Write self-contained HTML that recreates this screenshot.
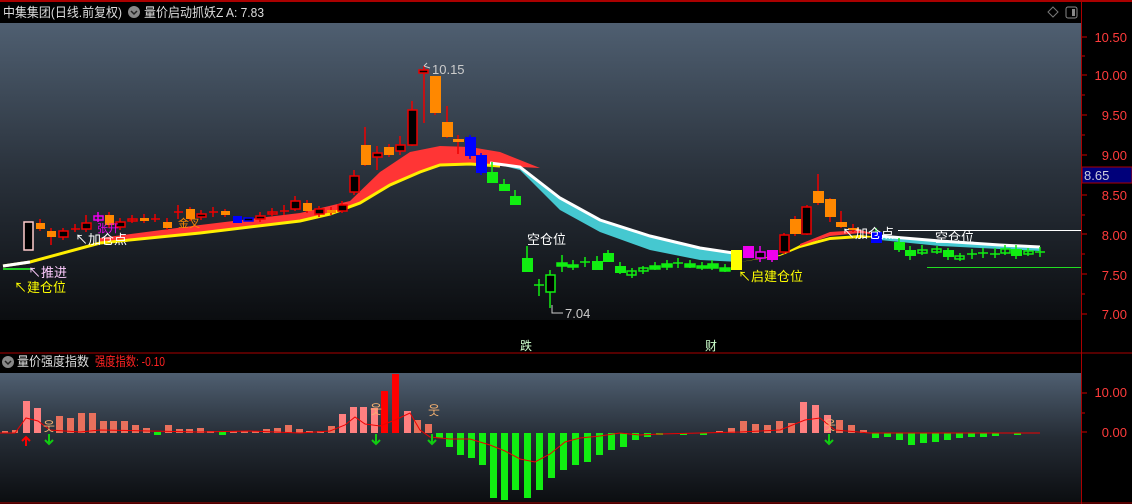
<!DOCTYPE html>
<html><head><meta charset="utf-8"><style>
body{margin:0;background:#000;width:1132px;height:504px;overflow:hidden;font-family:"Liberation Sans","Noto Sans CJK SC",sans-serif}
svg{display:block}
</style></head><body>
<svg width="1132" height="504" xmlns="http://www.w3.org/2000/svg" font-family="Liberation Sans, Noto Sans CJK SC, sans-serif">
<defs>
<linearGradient id="g1" x1="0" y1="0" x2="0" y2="1"><stop offset="0" stop-color="#4f5f71"/><stop offset="0.5" stop-color="#2a323c"/><stop offset="1" stop-color="#0b0d10"/></linearGradient>
<linearGradient id="g2" x1="0" y1="0" x2="0" y2="1"><stop offset="0" stop-color="#4f5f71"/><stop offset="0.5" stop-color="#252c35"/><stop offset="1" stop-color="#0b0d10"/></linearGradient>
</defs>
<rect width="1132" height="504" fill="#000"/>
<rect x="0" y="23" width="1081" height="297" fill="url(#g1)"/>
<rect x="0" y="373" width="1081" height="130" fill="url(#g2)"/>
<line x1="0" y1="1" x2="1132" y2="1" stroke="#a00" stroke-width="2"/>
<line x1="1081.5" y1="0" x2="1081.5" y2="504" stroke="#a00"/>
<line x1="0" y1="353" x2="1132" y2="353" stroke="#a00"/>
<line x1="0" y1="503" x2="1132" y2="503" stroke="#a00"/>
<text x="3" y="17" font-size="13" fill="#ddd" textLength="119" lengthAdjust="spacingAndGlyphs">中集集团(日线.前复权)</text>
<circle cx="134" cy="12" r="6" fill="#888"/><path d="M131 11l3 3 3-3" stroke="#222" stroke-width="1.5" fill="none"/>
<text x="144" y="17" font-size="13" fill="#ddd" textLength="120" lengthAdjust="spacingAndGlyphs">量价启动抓妖Z  A: 7.83</text>
<path d="M1053 7l5 5-5 5-5-5z" stroke="#777" fill="none"/>
<rect x="1066" y="7" width="11" height="11" rx="2" stroke="#888" fill="none"/><rect x="1072" y="9" width="3" height="7" fill="#888"/>
<circle cx="8" cy="362" r="6" fill="#888"/><path d="M5 361l3 3 3-3" stroke="#222" stroke-width="1.5" fill="none"/>
<text x="17" y="366" font-size="13" fill="#ddd" textLength="72" lengthAdjust="spacingAndGlyphs">量价强度指数</text>
<text x="95" y="366" font-size="13" fill="#f22" textLength="70" lengthAdjust="spacingAndGlyphs">强度指数: -0.10</text>
<g font-size="13" fill="#ff3b3b" text-anchor="end">
<text x="1127" y="42">10.50</text><text x="1127" y="80">10.00</text><text x="1127" y="120">9.50</text><text x="1127" y="160">9.00</text><text x="1127" y="200">8.50</text><text x="1127" y="240">8.00</text><text x="1127" y="280">7.50</text><text x="1127" y="319">7.00</text>
<text x="1127" y="397">10.00</text><text x="1127" y="437">0.00</text></g>
<g stroke="#c00" stroke-width="1">
<path d="M1082 37h5M1082 56h3M1082 75h5M1082 95h3M1082 115h5M1082 135h3M1082 155h5M1082 195h5M1082 215h3M1082 234h5M1082 254h3M1082 274h5M1082 294h3M1082 314h5M1082 393h5M1082 413h3M1082 432h5"/></g>
<rect x="1082" y="167" width="50" height="16" fill="#00007a" stroke="#a00"/>
<text x="1084" y="180" font-size="13" fill="#ccd">8.65</text>
<path d="M100 238L200 225L300 213L350 201L380 172L410 152L440 146L470 147L500 152L520 160L540 168L500 166L470 164L440 165L420 172L390 185L360 203L330 214L300 221L200 233L100 243Z" fill="#ff3535"/>
<path d="M3 266L30 262L100 243L200 233L300 221L330 214L360 203L390 185L420 172L440 165L470 164L500 166" stroke="#ffee00" stroke-width="3" fill="none"/>
<path d="M500 165L520 167L560 198L600 220L650 236L700 248L740 254L740 262L700 260L650 250L600 232L560 210L520 170Z" fill="#45c8d0"/>
<path d="M490 163L520 167L560 198L600 220L650 236L700 248L740 254" stroke="#fff" stroke-width="3" fill="none"/>
<path d="M740 262L780 255L800 245L830 237L860 235L880 237L860 238L830 240L800 248L780 256Z" fill="#ffee00"/>
<path d="M800 244L830 232L860 230L880 235L860 233L830 236L800 246Z" fill="#ff3535"/>
<path d="M880 236L940 241L1000 245L1040 248L1040 251L1000 249L940 246L880 240Z" fill="#45c8d0"/>
<path d="M880 236L940 241L1000 245L1040 247" stroke="#fff" stroke-width="3" fill="none"/>
<path d="M3 266L30 262" stroke="#fff" stroke-width="3"/>
<rect x="3" y="268" width="30" height="2" fill="#2c2"/>
<line x1="898" y1="230.5" x2="1081" y2="230.5" stroke="#fff"/>
<line x1="927" y1="267.5" x2="1081" y2="267.5" stroke="#2d2"/>
<g stroke-width="1.5">
<g stroke="#e00"><path d="M40 219v12M51 228v17M63 228v12M75 224v8M86 215v17M109 212v16M120 218v12M132 215v8M144 214v9M155 214v8M167 218v12M178 205v14M190 207v14M201 210v10M213 207v10M225 209v8M260 212v10M272 208v8M284 205v10M295 196v15M307 200v13M319 206v11M331 207v8M342 201v12M354 170v25M365 127v39M377 146v24M389 144v13M400 136v19M412 101v45M424 66v57M435 76v39M447 106v32M458 135v19M784 233v21M795 216v20M807 205v30M818 174v31M830 198v24M841 211v17M853 224v8"/></g>
<rect x="24" y="222" width="9" height="28" fill="#000" stroke="#fcc"/>
<rect x="36" y="223" width="9" height="6" fill="#f80" stroke="none"/>
<rect x="47" y="231" width="9" height="6" fill="#f80" stroke="none"/>
<rect x="59" y="231" width="9" height="6" fill="#000" stroke="#e00"/>
<path d="M71 229h9" stroke="#e00"/>
<rect x="82" y="223" width="9" height="6" fill="#000" stroke="#e00"/>
<rect x="94" y="216" width="9" height="4" fill="none" stroke="#e0e"/><path d="M98 212v10" stroke="#e0e"/>
<rect x="105" y="215" width="9" height="10" fill="#f80" stroke="none"/>
<rect x="116" y="222" width="9" height="5" fill="#000" stroke="#e00"/>
<rect x="128" y="219" width="9" height="2" fill="none" stroke="#e00"/>
<rect x="140" y="218" width="9" height="3" fill="#f80" stroke="none"/>
<path d="M151 219h9M174 212h9M209 212h9M280 211h9" stroke="#e00"/>
<rect x="163" y="222" width="9" height="6" fill="#f80" stroke="none"/>
<rect x="186" y="209" width="9" height="10" fill="#f80" stroke="none"/>
<rect x="197" y="214" width="9" height="3" fill="#000" stroke="#e00"/>
<rect x="221" y="211" width="9" height="4" fill="#f80" stroke="none"/>
<rect x="233" y="216" width="9" height="7" fill="#00f" stroke="none"/>
<rect x="244" y="218" width="9" height="3" fill="#000" stroke="#00f"/>
<rect x="256" y="216" width="9" height="3" fill="#000" stroke="#e00"/>
<rect x="268" y="212" width="9" height="2" fill="none" stroke="#e00"/>
<rect x="291" y="201" width="9" height="8" fill="#000" stroke="#e00"/>
<rect x="303" y="203" width="9" height="8" fill="#f80" stroke="none"/>
<rect x="315" y="209" width="9" height="5" fill="#000" stroke="#e00"/>
<rect x="327" y="210" width="9" height="3" fill="#f80" stroke="none"/>
<rect x="338" y="205" width="9" height="6" fill="#000" stroke="#e00"/>
<rect x="350" y="176" width="9" height="16" fill="#000" stroke="#e00"/>
<rect x="361" y="145" width="10" height="20" fill="#f80" stroke="none"/>
<rect x="373" y="153" width="9" height="4" fill="#000" stroke="#e00"/>
<rect x="384" y="147" width="10" height="8" fill="#f80" stroke="none"/>
<rect x="396" y="145" width="9" height="6" fill="#000" stroke="#e00"/>
<rect x="408" y="110" width="9" height="35" fill="#000" stroke="#e00"/>
<rect x="419" y="70" width="9" height="3" fill="#000" stroke="#e00"/>
<rect x="430" y="76" width="11" height="37" fill="#f80" stroke="none"/>
<rect x="442" y="122" width="11" height="15" fill="#f80" stroke="none"/>
<rect x="453" y="139" width="11" height="3" fill="#f80" stroke="none"/>
<path d="M470 135v24M481 153v22" stroke="#00f"/>
<rect x="465" y="137" width="11" height="19" fill="#00f" stroke="none"/>
<rect x="476" y="155" width="11" height="18" fill="#00f" stroke="none"/>
<g stroke="#1e1"><path d="M492 162v10M504 179v6M515 190v6M527 246v12M539 279v17M550 270v38M562 255v17M573 260v10M585 257v10M597 256v14M608 250v12M620 262v12M632 268v10M643 266v8M655 262v8M667 260v10M678 258v10M690 260v8M702 262v8M712 260v10M725 264v8M876 228v4M899 238v14M910 246v14M922 245v10M937 246v8M948 248v12M960 253v8M972 249v10M983 248v10M995 248v10M1005 245v10M1016 245v14M1028 248v8M1040 247v10"/>
<rect x="487" y="172" width="11" height="11" fill="#1e1" stroke="none"/>
<rect x="499" y="184" width="11" height="7" fill="#1e1" stroke="none"/>
<rect x="510" y="196" width="11" height="9" fill="#1e1" stroke="none"/>
<rect x="522" y="258" width="11" height="14" fill="#1e1" stroke="none"/>
<path d="M534 285h10M580 262h10M673 263h10M967 254h10M978 253h10M990 254h10M1035 252h10"/>
<rect x="546" y="275" width="9" height="17" fill="#000"/>
<rect x="557" y="263" width="10" height="3" fill="#1e1"/>
<rect x="568" y="265" width="10" height="2" fill="#1e1"/>
<rect x="592" y="261" width="11" height="9" fill="#1e1" stroke="none"/>
<rect x="603" y="253" width="11" height="9" fill="#1e1" stroke="none"/>
<rect x="615" y="266" width="11" height="7" fill="#1e1" stroke="none"/>
<rect x="627" y="271" width="9" height="4" fill="none"/>
<rect x="639" y="268" width="9" height="3" fill="none"/>
<rect x="650" y="266" width="10" height="3" fill="#1e1"/>
<rect x="662" y="264" width="10" height="3" fill="#1e1"/>
<rect x="685" y="264" width="10" height="3" fill="#1e1"/>
<rect x="697" y="266" width="10" height="2" fill="#1e1"/>
<rect x="708" y="264" width="10" height="4" fill="#1e1"/>
<rect x="720" y="268" width="10" height="3" fill="#1e1"/>
<rect x="894" y="242" width="11" height="8" fill="#1e1" stroke="none"/>
<rect x="905" y="250" width="11" height="6" fill="#1e1" stroke="none"/>
<rect x="918" y="250" width="9" height="3" fill="none"/>
<rect x="932" y="249" width="9" height="3" fill="none"/>
<rect x="943" y="250" width="11" height="7" fill="#1e1" stroke="none"/>
<rect x="955" y="256" width="9" height="3" fill="none"/>
<rect x="1001" y="249" width="9" height="4" fill="none"/>
<rect x="1011" y="249" width="11" height="7" fill="#1e1" stroke="none"/>
<rect x="1024" y="251" width="9" height="3" fill="none"/>
</g>
<rect x="731" y="250" width="11" height="20" fill="#ff0" stroke="none"/>
<rect x="743" y="246" width="11" height="12" fill="#e0e" stroke="none"/>
<path d="M760 246v16M772 250v12" stroke="#e0e"/>
<rect x="756" y="252" width="9" height="6" fill="#000" stroke="#e0e"/>
<rect x="767" y="250" width="11" height="10" fill="#e0e" stroke="none"/>
<rect x="780" y="235" width="9" height="17" fill="#000" stroke="#e00"/>
<rect x="790" y="219" width="11" height="15" fill="#f80" stroke="none"/>
<rect x="802" y="207" width="9" height="27" fill="#000" stroke="#e00"/>
<rect x="813" y="191" width="11" height="12" fill="#f80" stroke="none"/>
<rect x="825" y="199" width="11" height="18" fill="#f80" stroke="none"/>
<rect x="836" y="222" width="11" height="5" fill="#f80" stroke="none"/>
<rect x="848" y="228" width="11" height="2" fill="#f80" stroke="none"/>
<rect x="871" y="232" width="11" height="11" fill="#00f" stroke="none"/>
</g>
<g font-size="13">
<text x="432" y="74" fill="#ccc">10.15</text><path d="M430 68l-6-2m0 0l3-3" stroke="#ccc" fill="none"/>
<text x="565" y="318" fill="#ccc">7.04</text><path d="M563 313h-11v-8" stroke="#ccc" fill="none"/>
<text x="527" y="244" fill="#fff">空仓位</text>
<text x="935" y="242" fill="#fff">空仓位</text>
<text x="28" y="277" fill="#fcf">↖推进</text>
<text x="14" y="292" fill="#ff0">↖建仓位</text>
<text x="75" y="244" fill="#fff">↖加仓点</text>
<text x="97" y="232" font-size="11" fill="#e0e">张开</text>
<text x="178" y="227" font-size="11" fill="#f80">金叉</text>
<text x="738" y="281" fill="#ff0">↖启建仓位</text>
<text x="842" y="238" fill="#fff">↖加仓点</text>
<text x="520" y="350" font-size="12" fill="#cfc">跌</text>
<text x="705" y="350" font-size="12" fill="#cfc">财</text>
</g>
<g fill="#e8705c">
<rect x="2" y="431" width="6" height="2"/><rect x="12" y="430" width="6" height="3"/>
<rect x="23" y="401" width="7" height="32" fill="#ff8080"/><rect x="34" y="408" width="7" height="25" fill="#ff8080"/>
<rect x="56" y="416" width="7" height="17"/><rect x="67" y="418" width="7" height="15"/><rect x="78" y="413" width="7" height="20"/><rect x="89" y="413" width="7" height="20"/>
<rect x="100" y="421" width="7" height="12"/><rect x="110" y="421" width="7" height="12"/><rect x="121" y="421" width="7" height="12"/><rect x="132" y="425" width="7" height="8"/><rect x="143" y="428" width="7" height="5"/>
<rect x="165" y="425" width="7" height="8"/><rect x="176" y="429" width="7" height="4"/><rect x="186" y="429" width="7" height="4"/><rect x="197" y="428" width="7" height="5"/><rect x="207" y="431" width="7" height="2"/>
<rect x="230" y="431" width="7" height="2"/><rect x="241" y="431" width="7" height="2"/><rect x="252" y="431" width="7" height="2"/><rect x="263" y="429" width="7" height="4"/><rect x="274" y="428" width="7" height="5"/><rect x="285" y="425" width="7" height="8"/><rect x="296" y="429" width="7" height="4"/><rect x="306" y="431" width="7" height="2"/><rect x="317" y="431" width="7" height="2"/>
<rect x="328" y="426" width="7" height="7"/><rect x="339" y="414" width="7" height="19" fill="#ff8080"/><rect x="350" y="407" width="7" height="26" fill="#ff8080"/><rect x="360" y="407" width="7" height="26" fill="#ff8080"/><rect x="371" y="408" width="7" height="25" fill="#ff8080"/>
<rect x="381" y="391" width="7" height="42" fill="#f00"/><rect x="392" y="374" width="7" height="59" fill="#f00"/>
<rect x="404" y="411" width="7" height="22" fill="#ff8080"/><rect x="414" y="420" width="7" height="13"/><rect x="425" y="424" width="7" height="9"/>
<rect x="716" y="431" width="7" height="2"/><rect x="728" y="428" width="7" height="5"/><rect x="740" y="421" width="7" height="12"/><rect x="752" y="424" width="7" height="9"/><rect x="764" y="425" width="7" height="8"/><rect x="776" y="421" width="7" height="12"/><rect x="788" y="423" width="7" height="10"/>
<rect x="800" y="402" width="7" height="31" fill="#ff8080"/><rect x="812" y="405" width="7" height="28" fill="#ff8080"/><rect x="824" y="415" width="7" height="18" fill="#ff8080"/><rect x="836" y="420" width="7" height="13"/><rect x="848" y="425" width="7" height="8"/><rect x="860" y="430" width="7" height="3"/>
</g>
<g fill="#1e1">
<rect x="154" y="432" width="7" height="3"/><rect x="219" y="432" width="7" height="3"/>
<rect x="436" y="433" width="7" height="5"/><rect x="446" y="433" width="7" height="14"/><rect x="457" y="433" width="7" height="22"/><rect x="468" y="433" width="7" height="25"/><rect x="479" y="433" width="7" height="32"/>
<rect x="490" y="433" width="7" height="65"/><rect x="501" y="433" width="7" height="67"/><rect x="512" y="433" width="7" height="57"/><rect x="524" y="433" width="7" height="65"/><rect x="536" y="433" width="7" height="57"/><rect x="548" y="433" width="7" height="45"/><rect x="560" y="433" width="7" height="37"/><rect x="572" y="433" width="7" height="32"/><rect x="584" y="433" width="7" height="29"/><rect x="596" y="433" width="7" height="22"/><rect x="608" y="433" width="7" height="17"/><rect x="620" y="433" width="7" height="14"/><rect x="632" y="433" width="7" height="7"/><rect x="644" y="433" width="7" height="4"/><rect x="656" y="433" width="7" height="2"/><rect x="680" y="433" width="7" height="2"/><rect x="700" y="433" width="7" height="2"/>
<rect x="872" y="433" width="7" height="5"/><rect x="884" y="433" width="7" height="4"/><rect x="896" y="433" width="7" height="7"/><rect x="908" y="433" width="7" height="12"/><rect x="920" y="433" width="7" height="10"/><rect x="932" y="433" width="7" height="9"/><rect x="944" y="433" width="7" height="7"/><rect x="956" y="433" width="7" height="5"/><rect x="968" y="433" width="7" height="4"/><rect x="980" y="433" width="7" height="4"/><rect x="992" y="433" width="7" height="3"/><rect x="1014" y="433" width="7" height="2"/>
</g>
<path d="M0 433L15 433L26 418L38 421L50 430L80 432L100 430L150 431L200 432L250 431L300 433L330 431L345 425L355 417L365 424L380 426L395 420L410 413L420 430L430 437L450 439L470 439L490 445L505 451L520 459L535 462L550 454L565 442L580 438L600 436L620 433L640 435L660 434L700 433L740 432L780 430L805 420L820 418L835 430L870 433L1040 433" stroke="#e00" fill="none"/>
<path d="M26 446v-8M22 441l4-4 4 4" stroke="#f00" stroke-width="2" fill="none"/>
<g stroke="#1c1" stroke-width="2" fill="none"><path d="M49 434v9M45 440l4 4 4-4"/><path d="M376 434v9M372 440l4 4 4-4"/><path d="M432 434v9M428 440l4 4 4-4"/><path d="M829 434v9M825 440l4 4 4-4"/></g>
<g font-size="13" fill="#f5b070"><text x="43" y="431">웃</text><text x="370" y="414">웃</text><text x="428" y="415">웃</text><text x="824" y="430">웃</text></g>
</svg>
</body></html>
